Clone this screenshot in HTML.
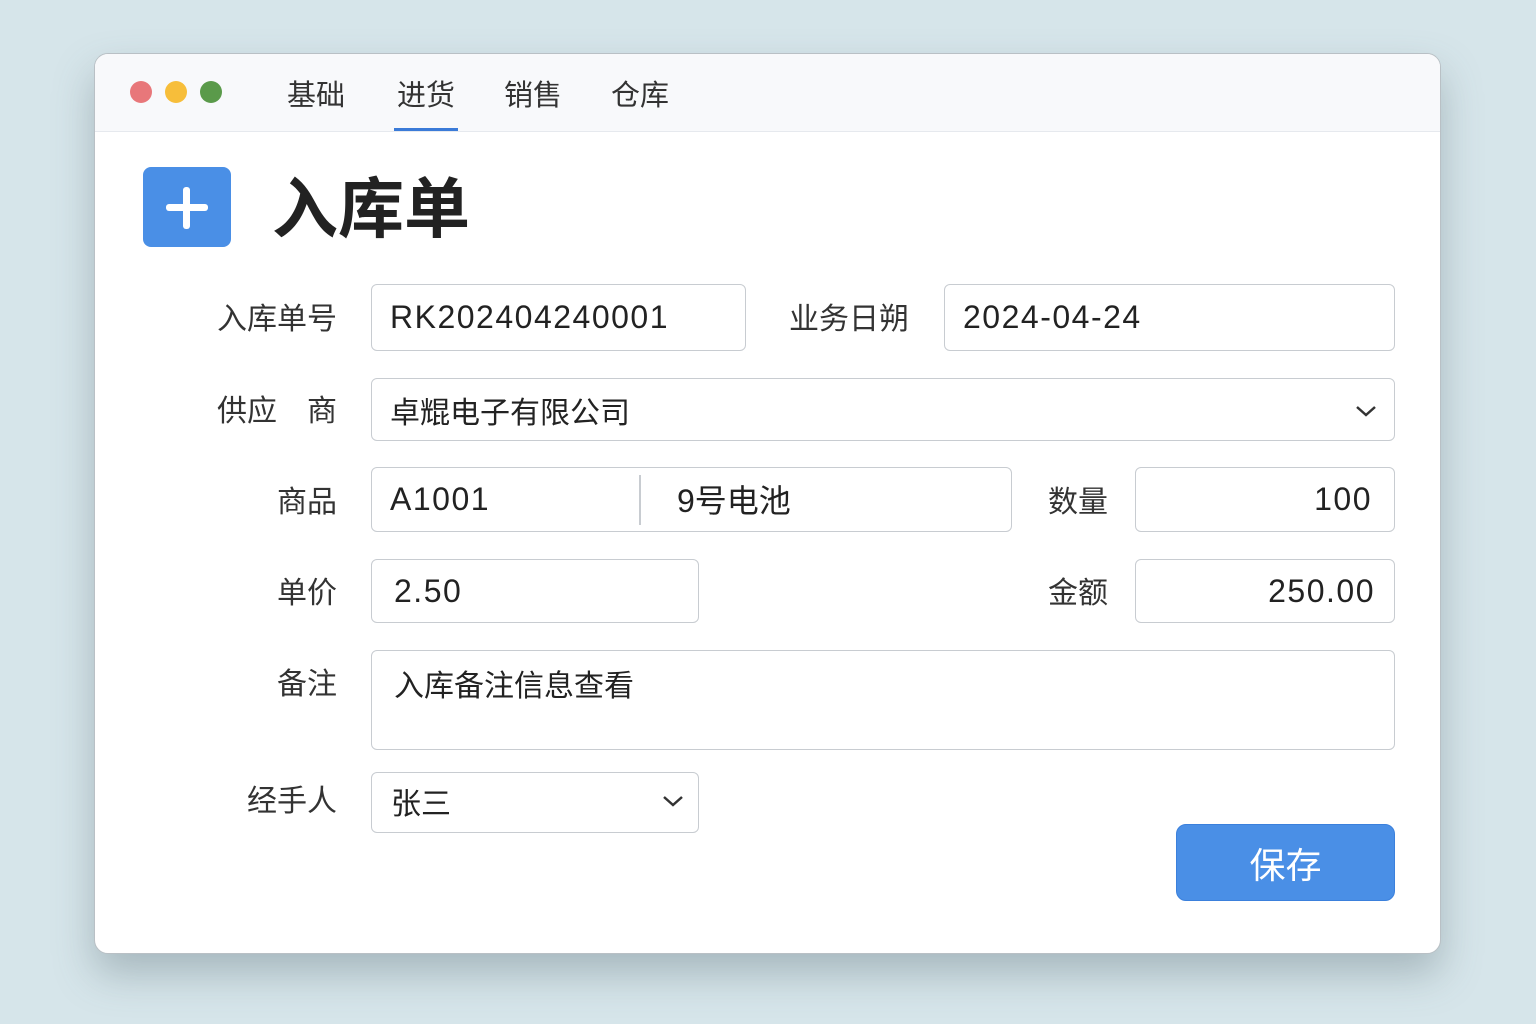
<!DOCTYPE html>
<html><head><meta charset="utf-8"><style>
*{margin:0;padding:0;box-sizing:border-box}
body{width:1536px;height:1024px;background:#d6e5ea;font-family:"Liberation Sans","Noto Sans CJK SC",sans-serif;position:relative;overflow:hidden}
.win{position:absolute;left:94px;top:53px;width:1347px;height:901px;background:#fff;border-radius:14px;box-shadow:0 20px 40px rgba(80,100,110,.35);overflow:hidden;border:1px solid #b9c0c5}
.tb{position:absolute;left:0;top:0;width:100%;height:78px;background:#f8f9fb;border-bottom:1px solid #e6e9ee}
.dot{position:absolute;top:27px;width:22px;height:22px;border-radius:50%}
.tab{position:absolute;top:18px;font-size:29px;color:#333}
.a{position:absolute}
.lab{position:absolute;font-size:30px;color:#333;white-space:nowrap;text-align:right;width:200px}
.in{position:absolute;border:1.5px solid #c8ccd1;border-radius:6px;background:#fff;font-size:32px;color:#222;display:flex;align-items:center;white-space:nowrap;letter-spacing:1.5px}
</style></head><body>
<div class="win">
<div class="tb">
<div class="dot" style="left:35px;background:#e8777a"></div>
<div class="dot" style="left:70px;background:#f7be3a"></div>
<div class="dot" style="left:105px;background:#5a9a4a"></div>
<div class="tab" style="left:192px">基础</div>
<div class="tab" style="left:302px">进货</div>
<div class="tab" style="left:409px">销售</div>
<div class="tab" style="left:516px">仓库</div>
<div class="a" style="left:299px;top:74px;width:64px;height:3px;background:#3b7bd8"></div>
</div>
</div>
<div class="a" style="left:143px;top:167px;width:88px;height:80px;background:#4a8fe6;border-radius:8px"></div>
<div class="a" style="left:166px;top:204px;width:42px;height:7px;background:#fff;border-radius:3px"></div>
<div class="a" style="left:183px;top:187px;width:7px;height:42px;background:#fff;border-radius:3px"></div>
<div class="a" style="left:272px;top:156px;font-size:66px;font-weight:bold;color:#222">入库单</div>

<div class="lab" style="left:137px;top:294px">入库单号</div>
<div class="in" style="left:371px;top:284px;width:375px;height:67px;padding-left:18px">RK202404240001</div>
<div class="lab" style="left:709px;top:294px">业务日朔</div>
<div class="in" style="left:944px;top:284px;width:451px;height:67px;padding-left:18px">2024-04-24</div>

<div class="lab" style="left:137px;top:386px">供应　商</div>
<div class="in" style="left:371px;top:378px;width:1024px;height:63px;padding-left:18px;font-size:30px;letter-spacing:0">卓尡电子有限公司</div>
<svg class="a" style="left:1355px;top:404px" width="22" height="14"><path d="M2 3l9 8 9-8" stroke="#333" stroke-width="2.5" fill="none"/></svg>

<div class="lab" style="left:137px;top:477px">商品</div>
<div class="in" style="left:371px;top:467px;width:641px;height:65px;padding-left:18px">A1001</div>
<div class="a" style="left:639px;top:475px;width:1.5px;height:50px;background:#c8ccd1"></div>
<div class="a" style="left:677px;top:476px;font-size:32px;color:#222">9号电池</div>
<div class="lab" style="left:908px;top:477px">数量</div>
<div class="in" style="left:1135px;top:467px;width:260px;height:65px;justify-content:flex-end;padding-right:22px">100</div>

<div class="lab" style="left:137px;top:568px">单价</div>
<div class="in" style="left:371px;top:559px;width:328px;height:64px;padding-left:22px">2.50</div>
<div class="lab" style="left:908px;top:568px">金额</div>
<div class="in" style="left:1135px;top:559px;width:260px;height:64px;justify-content:flex-end;padding-right:19px">250.00</div>

<div class="lab" style="left:137px;top:659px">备注</div>
<div class="in" style="left:371px;top:650px;width:1024px;height:100px;padding-left:22px;align-items:flex-start;padding-top:10px;font-size:30px;letter-spacing:0">入库备注信息查看</div>

<div class="lab" style="left:137px;top:776px">经手人</div>
<div class="in" style="left:371px;top:772px;width:328px;height:61px;padding-left:19px;font-size:30px;letter-spacing:0;padding-bottom:4px">张三</div>
<svg class="a" style="left:662px;top:794px" width="22" height="14"><path d="M2 3l9 8 9-8" stroke="#333" stroke-width="2.5" fill="none"/></svg>

<div class="a" style="left:1176px;top:824px;width:219px;height:77px;background:#4a8fe6;border-radius:10px;color:#fff;font-size:36px;display:flex;align-items:center;justify-content:center;border:1px solid #3b80dc">保存</div>
</body></html>
